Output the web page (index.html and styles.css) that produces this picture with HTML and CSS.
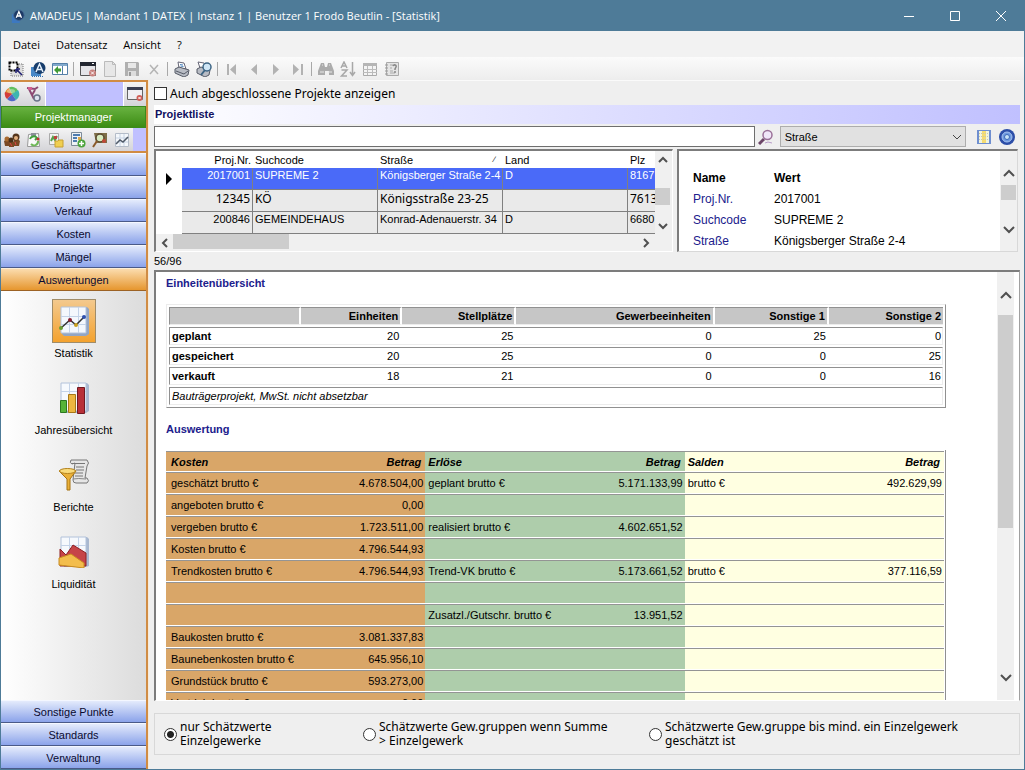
FILE: index.html
```html
<!DOCTYPE html>
<html lang="de">
<head>
  <meta charset="UTF-8">
  <meta name="viewport" content="width=device-width, initial-scale=1.0">
  <title>AMADEUS - Statistik</title>
  <link rel="stylesheet" href="styles.css">
</head>
<body>

<div class="window">
  <header class="titlebar">
    <svg class="app-icon" viewBox="0 0 16 16"><path d="M1 6h9v10H1z" fill="#3d78c0"/><circle cx="9" cy="7" r="6" fill="#1d3a66" stroke="#456a96"/><path d="M6 10l3-7 3 7M7 8h4" stroke="#fff" stroke-width="1.5" fill="none"/></svg>
    <span class="title">AMADEUS | Mandant 1 DATEX | Instanz 1 | Benutzer 1 Frodo Beutlin - [Statistik]</span>
    <button class="win-btn" aria-label="Minimieren"><svg viewBox="0 0 12 12"><path d="M1 6.5h10"/></svg></button>
    <button class="win-btn" aria-label="Maximieren"><svg viewBox="0 0 12 12"><path d="M1.500 1.500h9v9h-9z"/></svg></button>
    <button class="win-btn" aria-label="Schließen"><svg viewBox="0 0 12 12"><path d="M1 1l10 10M11 1L1 11"/></svg></button>
  </header>

  <nav class="menubar">
    <a href="#">Datei</a>
    <a href="#">Datensatz</a>
    <a href="#">Ansicht</a>
    <a href="#">?</a>
  </nav>

  <div class="toolbar">
    <button aria-label="Auswahl"><svg viewBox="0 0 16 16"><path d="M3 3h12v12H3z" fill="#ddd" stroke="#777" stroke-dasharray="1 1"/><path d="M1.500 1.500h8v8h-8z" fill="#fff" stroke="#000" stroke-width="2" stroke-dasharray="2 1"/><path d="M9 9l5 5M8 8v4M8 8h4" stroke="#1c1c70" stroke-width="1.500" fill="none"/></svg></button>
    <button aria-label="Amadeus"><svg viewBox="0 0 16 16"><path d="M1 6h10v9H1z" fill="#4888c8"/><path d="M2 15.500h11" stroke="#3070b0" stroke-dasharray="1 1"/><circle cx="9.500" cy="7" r="6" fill="#173d6c"/><path d="M6 11l3.500-8 3.500 8M7.500 8.500h4" stroke="#e8f2fc" stroke-width="1.500" fill="none"/></svg></button>
    <button aria-label="Navigation"><svg viewBox="0 0 16 16"><path d="M.5 2.500h15v11H.5z" fill="#fff" stroke="#5580a8"/><path d="M1 3h14v2H1z" fill="#82a9cc"/><path d="M10.500 5v8" stroke="#5580a8"/><path d="M2 9l4-4v2.500h3v3H6V13z" fill="#3f9a35"/></svg></button>
    <span class="sep"></span>
    <button aria-label="Fenster schließen"><svg viewBox="0 0 16 16"><path d="M.5 1.500h15v13H.5z" fill="#e4e4e8" stroke="#555"/><path d="M0 1h16v4H0z" fill="#222630"/><path d="M12 2.500h2" stroke="#fff"/><circle cx="12.500" cy="12" r="3.500" fill="#c8807c"/><path d="M11 10.500l3 3m0-3l-3 3" stroke="#fff"/></svg></button>
    <button aria-label="Neu" disabled><svg viewBox="0 0 16 16"><path d="M2.500.5h8l3 3v12h-11z" fill="#e7e7e7" stroke="#bbb"/><path d="M10.500.5v3h3" fill="none" stroke="#bbb"/></svg></button>
    <button aria-label="Speichern" disabled><svg viewBox="0 0 16 16"><path d="M1 1h13l1 1v13H1z" fill="#b0b0b0"/><path d="M4 2h8v5H4z" fill="#e8e8e8"/><path d="M4 10h8v5H4z" fill="#ddd"/><path d="M5 11h2v4H5z" fill="#999"/></svg></button>
    <button aria-label="Löschen" disabled><svg viewBox="0 0 16 16"><path d="M4 4l8 9M12 4l-8 9" stroke="#b4b4b4" stroke-width="1.500"/></svg></button>
    <span class="sep"></span>
    <button aria-label="Drucken"><svg viewBox="0 0 16 16"><path d="M4 1l6 1 2 6-7-1z" fill="#fff" stroke="#667"/><path d="M1 8l4-2 10 3-1 5-4 2-9-4z" fill="#b8bcc4" stroke="#555a66"/><path d="M2 10l8 3 4-3" stroke="#555a66" fill="none"/><path d="M6 3.500l3 .5M6.500 5l3 .5" stroke="#4c86c0"/></svg></button>
    <button aria-label="Druckvorschau"><svg viewBox="0 0 16 16"><path d="M2 1l6 1 2 6-6-1z" fill="#fff" stroke="#667"/><path d="M1 8l4-2 9 3-1 5-4 2-8-4z" fill="#b8bcc4" stroke="#555a66"/><circle cx="11" cy="6" r="4" fill="#cfe6f6" stroke="#3c6484" stroke-width="1.500"/><path d="M9 9l-4 5" stroke="#3c6484" stroke-width="2"/></svg></button>
    <span class="sep"></span>
    <button aria-label="Erster" disabled><svg viewBox="0 0 16 16"><path d="M3 3h2v11H3zM12 3v11L6 8.500z" fill="#b2b2b2"/></svg></button>
    <button aria-label="Zurück" disabled><svg viewBox="0 0 16 16"><path d="M11 3v11L5 8.500z" fill="#b2b2b2"/></svg></button>
    <button aria-label="Weiter" disabled><svg viewBox="0 0 16 16"><path d="M5 3v11l6-5.500z" fill="#b2b2b2"/></svg></button>
    <button aria-label="Letzter" disabled><svg viewBox="0 0 16 16"><path d="M3 3v11l6-5.500zM11 3h2v11h-2z" fill="#b2b2b2"/></svg></button>
    <span class="sep"></span>
    <button aria-label="Suchen" disabled><svg viewBox="0 0 16 16"><path d="M3 2h3l1 4h2l1-4h3l3 8v4h-5v-4H7v4H0v-4z" fill="#acacac"/><path d="M2 11h4M10 11h4M4 4h1M11 4h1" stroke="#e8e8e8"/></svg></button>
    <button aria-label="Sortieren" disabled><svg viewBox="0 0 16 16" fill="none" stroke="#a8a8a8" stroke-width="1.500"><path d="M1 7l3-6 3 6M2 5h4M1.500 9H7l-5.500 6H7M12.500 1v13M10 11l2.500 3.500L15 11"/></svg></button>
    <button aria-label="Tabelle" disabled><svg viewBox="0 0 16 16"><path d="M1.500 2.500h13v12h-13z" fill="#f4f4f4" stroke="#aaa"/><path d="M1 2h14v3H1z" fill="#b5b5b5"/><path d="M1 8.500h14M1 11.500h14M5.500 5v9M10.500 5v9" stroke="#bbb"/></svg></button>
    <button aria-label="Protokoll" disabled><svg viewBox="0 0 16 16"><path d="M2.500 1.500h12v13h-12z" fill="#e4e4e4" stroke="#aaa"/><path d="M1 4h3M1 7h3M1 10h3M1 13h3" stroke="#999"/><path d="M6 4h3M6 7h2M6 10h3M6 12h5" stroke="#aaa"/><path d="M9 5c1-2 4-1 3 1l-1 2v1M11 10v2" stroke="#888" stroke-width="1.500" fill="none"/></svg></button>
  </div>

  <div class="body">
    <aside class="sidebar">
      <div class="quick quick-top">
        <button aria-label="Farben"><svg viewBox="0 0 16 16"><path d="M8 8L1 8a7 7 0 0 1 4-6z" fill="#e08a30"/><path d="M8 8L5 1.500a7 7 0 0 1 9 3z" fill="#60c060"/><path d="M8 8l6-4a7 7 0 0 1-2 10z" fill="#3db5b0"/><path d="M8 8l4 6a7 7 0 0 1-9-1z" fill="#5068c8"/><path d="M8 8l-5 5a7 7 0 0 1-2-7z" fill="#d43c3c"/><ellipse cx="7" cy="5" rx="4" ry="2" fill="#fff" opacity=".35"/></svg></button>
        <button aria-label="Werkzeuge"><svg viewBox="0 0 16 16"><path d="M1 2l8 1 3-2M3 3l5 10M9 4L6 9" stroke="#8c4a74" stroke-width="2" fill="none"/><path d="M2 1h4v3H2z" fill="#d06090"/><circle cx="11" cy="12" r="3" fill="#dde4f0" stroke="#6b7488" stroke-width="1.500"/></svg></button>
        <span class="quick-fill"></span>
        <button aria-label="Fenster"><svg viewBox="0 0 16 16"><path d="M.5 1.500h15v12H.5z" fill="#f0f0f4" stroke="#666"/><path d="M0 1h16v3H0z" fill="#3a3f52"/><circle cx="12.500" cy="12" r="3" fill="#d0605a"/><path d="M11.500 11l2 2m0-2l-2 2" stroke="#fff"/></svg></button>
      </div>
      <button class="module">Projektmanager</button>
      <div class="quick quick-mod">
        <button aria-label="Personen"><svg viewBox="0 0 16 16"><path d="M0 9q3-3 5 0v5H1zM5 10q3-4 5 0v5H5zM10 8q4-2 6 1l-1 5h-5z" fill="#7a4a24"/><circle cx="3" cy="7" r="2.500" fill="#a86a30"/><circle cx="7" cy="8" r="2.500" fill="#4a3018"/><circle cx="12" cy="5" r="3.500" fill="#54351c"/><circle cx="12" cy="6" r="2" fill="#e2b080"/><path d="M6 11l2 3M11 10l1 3" stroke="#d44"/></svg></button>
        <button aria-label="Aufgaben"><svg viewBox="0 0 16 16"><path d="M2.500 2.500l10-1 1 13h-12z" fill="#fafafa" stroke="#999"/><path d="M5 1h5v3H5z" fill="#8b8f98"/><path d="M4 7a4 4 0 0 1 7-1l-2 2" fill="none" stroke="#3ea03a" stroke-width="2"/><path d="M12 9a4 4 0 0 1-7 3" fill="none" stroke="#70b858" stroke-width="2"/><circle cx="12" cy="7" r="1.500" fill="#c03030"/></svg></button>
        <button aria-label="Ordner"><svg viewBox="0 0 16 16"><path d="M1.500 1.500h9v11h-9z" fill="#f3f3f3" stroke="#aaa"/><path d="M3 9l2-4 2 3 2-4" stroke="#58a048" stroke-width="2" fill="none"/><path d="M6 4h3v3H6z" fill="#c04040"/><path d="M7 9h3l1-1h4v7H7z" fill="#f0cf50" stroke="#c8a030"/></svg></button>
        <button aria-label="Neue Kalkulation"><svg viewBox="0 0 16 16"><path d="M1.500.5h10v13h-10z" fill="#eef2f6" stroke="#7c8a98"/><path d="M3 3h7M3 6h4M3 9h4" stroke="#4f7cae" stroke-width="2"/><path d="M8 5h3v3H8z" fill="#e0a848"/><circle cx="11.500" cy="11.500" r="4" fill="#4ca43c"/><path d="M11.500 9v5M9 11.500h5" stroke="#fff" stroke-width="1.500"/></svg></button>
        <button aria-label="Lupe"><svg viewBox="0 0 16 16"><path d="M2 1h13v10H4z" fill="#7e6e48"/><circle cx="8" cy="6" r="4" fill="#d8ecc0" stroke="#5b4a30" stroke-width="1.500"/><path d="M5 9l-4 6" stroke="#8a5a2a" stroke-width="2"/><circle cx="12" cy="9" r="2" fill="#c04838"/></svg></button>
        <button aria-label="Statistik"><svg viewBox="0 0 16 16"><path d="M1.500 1.500h13v13h-13z" fill="#f4f7fb" stroke="#b4bcc8"/><path d="M6 2v12M10 2v12M2 6h12M2 10h12" stroke="#c8d4e4"/><path d="M2 12l4-4 3 2 5-5" stroke="#505a68" stroke-width="1.500" fill="none"/></svg></button>
      </div>
      <nav class="groups">
        <button>Geschäftspartner</button>
        <button>Projekte</button>
        <button>Verkauf</button>
        <button>Kosten</button>
        <button>Mängel</button>
        <button class="active">Auswertungen</button>
      </nav>
      <div class="items">
        <a href="#" class="item selected">
          <span class="item-icon"><svg viewBox="0 0 32 32"><path d="M4 2h25l2 2v25l-3 2H6l-2-2z" fill="#93a6c4"/><path d="M3 2h25v26H3z" fill="#f4f8fd" stroke="#b2c2da"/><path d="M11.500 2v26M20.500 2v26M3 11.500h25M3 19.500h25" stroke="#c4d3e8"/><path d="M3 23l9-8 6 5 8-8" stroke="#333" stroke-width="1.500" fill="none"/><circle cx="3" cy="23" r="2" fill="#6a9c30"/><circle cx="12" cy="15" r="2" fill="#8a2030"/><circle cx="18" cy="20" r="2" fill="#c8a020"/><circle cx="26" cy="12" r="2" fill="#2c50b0"/></svg></span>
          <span>Statistik</span>
        </a>
        <a href="#" class="item">
          <span class="item-icon"><svg viewBox="0 0 32 32"><path d="M5 1h24l2 2v26l-3 2H6z" fill="#a9b8d0"/><path d="M3 1h25v28H3z" fill="#f6f9fd" stroke="#b2c2da"/><path d="M11.500 1v28M20.500 1v28M3 9.500h25" stroke="#c4d3e8"/><path d="M2.500 18.500h6v12h-6z" fill="#56b438" stroke="#2c7820"/><path d="M10.500 12.500h7v18h-7z" fill="#edb640" stroke="#a87818"/><path d="M19.500 5.500h7v26h-7z" fill="#b83038" stroke="#701820"/></svg></span>
          <span>Jahresübersicht</span>
        </a>
        <a href="#" class="item">
          <span class="item-icon"><svg viewBox="0 0 32 32"><path d="M13 1q-2 3 1 4l3-1-2 17q0 3 3 3h11q3-2 0-5h-2l2-12q3-3 0-6z" fill="#e6e6e6" stroke="#777"/><path d="M14 4.500h13M18 8h8M18 11h8M17 14h8M17 17h8" stroke="#777"/><path d="M15 20q5-1 13 0" stroke="#888" fill="none"/><path d="M1 12q8-4 17 0l-6 8v11H9V20z" fill="#eab038" stroke="#a67212"/><ellipse cx="9.500" cy="12" rx="8" ry="2.500" fill="#f9db7c" stroke="#b58420"/></svg></span>
          <span>Berichte</span>
        </a>
        <a href="#" class="item">
          <span class="item-icon"><svg viewBox="0 0 32 32"><path d="M5 1h24l2 2v27l-3 1H6z" fill="#a9b8d0"/><path d="M3 1h25v28H3z" fill="#f6f9fd" stroke="#b2c2da"/><path d="M11.500 1v20M20.500 1v20M3 9.500h25" stroke="#c4d3e8"/><path d="M2 13l6 6 7-10 13 8v13H2z" fill="#c64448" stroke="#8c2024"/><path d="M1 22l12-4 13 9v5L1 29z" fill="#f3bd4c" stroke="#c88c20"/></svg></span>
          <span>Liquidität</span>
        </a>
      </div>
      <nav class="groups">
        <button>Sonstige Punkte</button>
        <button>Standards</button>
        <button>Verwaltung</button>
      </nav>
    </aside>

    <main class="content">
      <div class="option-row">
        <input type="checkbox" id="abgeschlossen">
        <label for="abgeschlossen">Auch abgeschlossene Projekte anzeigen</label>
      </div>
      <h2 class="list-title">Projektliste</h2>

      <div class="search-row">
        <input type="text" class="search" aria-label="Suche">
        <button aria-label="Suchen"><svg viewBox="0 0 16 16"><path d="M6 10l-5 5" stroke="#6c4668" stroke-width="3"/><circle cx="9.500" cy="6" r="4.500" fill="#f0e6f8" stroke="#9a7098" stroke-width="1.500"/><path d="M7 14l3-1 4 1" stroke="#b89cc8" fill="none"/></svg></button>
        <div class="select-wrap">
          <select aria-label="Suchfeld"><option>Straße</option></select>
          <svg viewBox="0 0 10 10"><path d="M1 3l4 4 4-4"/></svg>
        </div>
        <button aria-label="Spalten"><svg viewBox="0 0 16 16"><path d="M1 1h14v14H1z" fill="#6f8fd0"/><path d="M3 2h10v12H3z" fill="#f2f4dc"/><path d="M6 2h4v12H6z" fill="#f6dc70"/><path d="M3 4.500h10M3 7.500h10M3 10.500h10" stroke="#c8c8b0" stroke-dasharray="1 1"/></svg></button>
        <button aria-label="Einstellungen"><svg viewBox="0 0 16 16"><circle cx="8" cy="8" r="8" fill="#2c4ea8"/><circle cx="8" cy="8" r="5" fill="#6f9ae0" stroke="#a8c4f0"/><circle cx="8" cy="8" r="2.500" fill="#c8e4f8" stroke="#3c68b8"/></svg></button>
      </div>

      <div class="panels">
        <div class="grid-panel">
          <div class="grid-top">
            <div class="grid-clip">
              <table class="grid">
                <colgroup><col class="c-mark"><col class="c-nr"><col class="c-text"><col class="c-text"><col class="c-text"><col></colgroup>
                <thead>
                  <tr><th></th><th class="num">Proj.Nr.</th><th>Suchcode</th><th><span class="sorted">Straße <i>∕</i></span></th><th>Land</th><th>Plz</th></tr>
                </thead>
                <tbody>
                  <tr class="current"><td class="mark"><svg viewBox="0 0 6 12"><path d="M0 0v12l6-6z"/></svg></td><td class="num">2017001</td><td>SUPREME 2</td><td>Königsberger Straße 2-4</td><td>D</td><td>8167</td></tr>
                  <tr class="wide"><td class="mark"></td><td class="num">12345</td><td>KÖ</td><td>Königsstraße 23-25</td><td></td><td>7613</td></tr>
                  <tr><td class="mark"></td><td class="num">200846</td><td>GEMEINDEHAUS</td><td>Konrad-Adenauerstr. 34</td><td>D</td><td>6680</td></tr>
                </tbody>
              </table>
            </div>
            <div class="vscroll vscroll-grid">
              <button aria-label="Nach oben"><svg viewBox="0 0 10 10"><path d="M1 7l4-4 4 4"/></svg></button>
              <span class="thumb"></span>
              <button aria-label="Nach unten"><svg viewBox="0 0 10 10"><path d="M1 3l4 4 4-4"/></svg></button>
            </div>
          </div>
          <div class="hscroll">
            <button aria-label="Nach links"><svg viewBox="0 0 10 10"><path d="M7 1L3 5l4 4"/></svg></button>
            <span class="thumb"></span>
            <button aria-label="Nach rechts"><svg viewBox="0 0 10 10"><path d="M3 1l4 4-4 4"/></svg></button>
          </div>
        </div>

        <div class="detail-panel">
          <table class="detail">
            <tr><th>Name</th><th>Wert</th></tr>
            <tr><td>Proj.Nr.</td><td>2017001</td></tr>
            <tr><td>Suchcode</td><td>SUPREME 2</td></tr>
            <tr><td>Straße</td><td>Königsberger Straße 2-4</td></tr>
          </table>
          <div class="vscroll vscroll-detail">
            <button aria-label="Nach oben"><svg viewBox="0 0 12 12"><path d="M1 9l5-5 5 5"/></svg></button>
            <span class="thumb"></span>
            <button aria-label="Nach unten"><svg viewBox="0 0 12 12"><path d="M1 3l5 5 5-5"/></svg></button>
          </div>
        </div>
      </div>

      <div class="count">56/96</div>

      <section class="report">
        <div class="report-body">
          <h3>Einheitenübersicht</h3>
          <table class="units">
            <colgroup><col class="u1"><col class="u2"><col class="u3"><col class="u4"><col class="u3"><col class="u3"></colgroup>
            <tr><th></th><th>Einheiten</th><th>Stellplätze</th><th>Gewerbeeinheiten</th><th>Sonstige 1</th><th>Sonstige 2</th></tr>
            <tr><td>geplant</td><td>20</td><td>25</td><td>0</td><td>25</td><td>0</td></tr>
            <tr><td>gespeichert</td><td>20</td><td>25</td><td>0</td><td>0</td><td>25</td></tr>
            <tr><td>verkauft</td><td>18</td><td>21</td><td>0</td><td>0</td><td>16</td></tr>
            <tr><td colspan="6" class="note">Bauträgerprojekt, MwSt. nicht absetzbar</td></tr>
          </table>

          <h3>Auswertung</h3>
          <table class="result">
            <tr><th>Kosten</th><th>Betrag</th><th>Erlöse</th><th>Betrag</th><th>Salden</th><th>Betrag</th></tr>
            <tr><td>geschätzt brutto €</td><td>4.678.504,00</td><td>geplant brutto €</td><td>5.171.133,99</td><td>brutto €</td><td>492.629,99</td></tr>
            <tr><td>angeboten brutto €</td><td>0,00</td><td></td><td></td><td></td><td></td></tr>
            <tr><td>vergeben brutto €</td><td>1.723.511,00</td><td>realisiert brutto €</td><td>4.602.651,52</td><td></td><td></td></tr>
            <tr><td>Kosten brutto €</td><td>4.796.544,93</td><td></td><td></td><td></td><td></td></tr>
            <tr><td>Trendkosten brutto €</td><td>4.796.544,93</td><td>Trend-VK brutto €</td><td>5.173.661,52</td><td>brutto €</td><td>377.116,59</td></tr>
            <tr><td></td><td></td><td></td><td></td><td></td><td></td></tr>
            <tr><td></td><td></td><td>Zusatzl./Gutschr. brutto €</td><td>13.951,52</td><td></td><td></td></tr>
            <tr><td>Baukosten brutto €</td><td>3.081.337,83</td><td></td><td></td><td></td><td></td></tr>
            <tr><td>Baunebenkosten brutto €</td><td>645.956,10</td><td></td><td></td><td></td><td></td></tr>
            <tr><td>Grundstück brutto €</td><td>593.273,00</td><td></td><td></td><td></td><td></td></tr>
            <tr><td>Vertrieb brutto €</td><td>0,00</td><td></td><td></td><td></td><td></td></tr>
          </table>
        </div>
        <div class="vscroll vscroll-report">
          <button aria-label="Nach oben"><svg viewBox="0 0 12 12"><path d="M1 9l5-5 5 5"/></svg></button>
          <span class="thumb"></span>
          <button aria-label="Nach unten"><svg viewBox="0 0 12 12"><path d="M1 3l5 5 5-5"/></svg></button>
        </div>
      </section>

      <div class="modes">
        <label><input type="radio" name="modus" checked><span>nur Schätzwerte<br>Einzelgewerke</span></label>
        <label><input type="radio" name="modus"><span>Schätzwerte Gew.gruppen wenn Summe<br>&gt; Einzelgewerk</span></label>
        <label><input type="radio" name="modus"><span>Schätzwerte Gew.gruppe bis mind. ein Einzelgewerk<br>geschätzt ist</span></label>
      </div>
    </main>
  </div>
</div>

</body>
</html>
```

FILE: styles.css
```css
* {
  box-sizing: border-box;
}
body {
  margin: 0;
  font-family: "Liberation Sans", Arial, sans-serif;
  font-size: 11px;
  color: #000;
}
button {
  border: none;
  background: none;
  padding: 0;
  font: inherit;
  color: inherit;
}
svg {
  display: block;
}
a {
  color: inherit;
  text-decoration: none;
}
table {
  border-spacing: 0;
}
.window {
  height: 100vh;
  display: flex;
  flex-direction: column;
  background-color: #efefef;
  border: 1px solid #4e7b98;
  border-top: none;
  overflow: hidden;
}

/* title, menu, toolbar */
.titlebar {
  flex: none;
  height: 31px;
  display: flex;
  align-items: center;
  padding-left: 10px;
  background-color: #4e7b98;
  color: #fff;
  font-family: "Open Sans", sans-serif;
}
.app-icon {
  width: 14px;
  height: 14px;
}
.title {
  flex: 1;
  margin-left: 5px;
  white-space: nowrap;
}
.win-btn {
  width: 46px;
  height: 31px;
  display: flex;
  align-items: center;
  justify-content: center;
}
.win-btn svg {
  width: 12px;
  height: 12px;
  fill: none;
  stroke: #fff;
}
.menubar {
  flex: none;
  height: 26px;
  display: flex;
  align-items: center;
  gap: 16px;
  padding-left: 12px;
  background-color: #f2f2f2;
  font-family: "Open Sans", sans-serif;
}
.toolbar {
  flex: none;
  height: 23px;
  display: flex;
  align-items: center;
  padding-left: 4px;
  background: linear-gradient(#fbfbfb, #ededed);
}
.toolbar button {
  width: 22px;
  display: flex;
  justify-content: center;
}
.toolbar svg, .quick svg, .search-row button svg {
  width: 16px;
  height: 16px;
}
.toolbar .sep {
  width: 2px;
  height: 14px;
  margin: 0 2px;
  border-left: 1px solid #a8a8a8;
}
.body {
  flex: 1;
  min-height: 0;
  display: flex;
}

/* sidebar */
.sidebar {
  width: 147px;
  flex: none;
  display: flex;
  flex-direction: column;
  border-top: 2px solid #d08c44;
  border-right: 2px solid #d08c44;
}
.quick {
  display: flex;
  background-color: #c0c0ff;
}
.quick button {
  width: 22px;
  display: flex;
  align-items: center;
  justify-content: center;
  background: linear-gradient(#f4f4f4, #d4d4d8);
}
.quick-top {
  height: 24px;
}
.quick-fill {
  flex: 1;
  border-left: 1px solid #fff;
  border-right: 1px solid #fff;
}
.module {
  height: 22px;
  border: 1px solid #3a8a1c;
  background: linear-gradient(#68b240, #3c8c14);
  color: #fff;
}
.quick-mod {
  height: 25px;
  border-bottom: 2px solid #d08c44;
}
.groups {
  display: flex;
  flex-direction: column;
}
.groups button {
  height: 23px;
  border-top: 1px solid #f4f7ff;
  border-bottom: 1px solid #4a5a88;
  background: linear-gradient(#e4ebfc, #8ba3ea);
  color: #0a0a30;
}
.groups .active {
  background: linear-gradient(#fbdcae, #e6962e);
  border-top-color: #fdeed6;
  border-bottom-color: #9c6224;
}
.items {
  flex: 1;
  min-height: 0;
  overflow: hidden;
  display: flex;
  flex-direction: column;
  gap: 13px;
  padding-top: 8px;
  background: linear-gradient(to right, #fff, #dcdcdc);
}
.item {
  display: flex;
  flex-direction: column;
  align-items: center;
  line-height: 20px;
}
.item-icon {
  width: 44px;
  height: 44px;
  padding: 6px;
}
.selected .item-icon {
  padding: 5px;
  border: 1px solid #a08c68;
  background: linear-gradient(#f3c98e, #f4a22e);
}

/* content */
.content {
  flex: 1;
  min-width: 0;
  display: flex;
  flex-direction: column;
  padding: 0 4px 14px 5px;
  border-left: 1px solid #f8ead6;
}
.option-row {
  flex: none;
  height: 25px;
  display: flex;
  align-items: center;
  gap: 3px;
  font-family: "Noto Sans", sans-serif;
  font-size: 12px;
  border-top: 1px solid #fafafa;
}
.option-row input {
  appearance: none;
  width: 13px;
  height: 13px;
  margin: 0;
  border: 1px solid #333;
  background-color: #fff;
}
.list-title {
  flex: none;
  height: 19px;
  margin: 0 0 2px;
  padding-left: 1px;
  font-size: 11px;
  line-height: 18px;
  color: #101060;
  background: linear-gradient(to right, #fff, #c0c0ff);
}
.search-row {
  flex: none;
  height: 21px;
  display: flex;
  align-items: center;
  padding-right: 2px;
}
.search-row button {
  width: 23px;
  display: flex;
  justify-content: center;
}
.search {
  flex: 600;
  min-width: 0;
  height: 21px;
  border: 1px solid #6e6e6e;
  background-color: #fff;
}
.select-wrap {
  flex: 188;
  position: relative;
  margin: 0 6px 0 2px;
}
.select-wrap select {
  appearance: none;
  width: 100%;
  height: 21px;
  padding: 0 4px;
  border: 1px solid #adadad;
  border-radius: 0;
  background-color: #e1e1e1;
  font: inherit;
  color: #000;
}
.select-wrap svg {
  position: absolute;
  right: 4px;
  top: 6px;
  width: 10px;
  height: 10px;
  fill: none;
  stroke: #444;
  pointer-events: none;
}
.panels {
  flex: none;
  display: flex;
  gap: 4px;
  height: 103px;
  margin-top: 2px;
}
.grid-panel {
  flex: 519;
  min-width: 0;
  display: flex;
  flex-direction: column;
  border: 1px solid #fff;
  border-top: 2px solid #7c7c7c;
  border-left: 2px solid #7c7c7c;
}
.grid-top {
  flex: 1;
  min-height: 0;
  display: flex;
}
.grid-clip {
  flex: 1;
  min-width: 0;
  overflow: hidden;
}
.grid {
  width: 100%;
  table-layout: fixed;
}
.c-mark {
  width: 26px;
}
.c-nr {
  width: 71px;
}
.c-text {
  width: 125px;
}
.grid th, .grid td {
  height: 22px;
  padding: 0 2px;
  text-align: left;
  font-weight: normal;
  white-space: nowrap;
  overflow: hidden;
  line-height: 14px;
}
.grid th {
  height: 17px;
  background-color: #fff;
}
.grid td {
  vertical-align: top;
  background-color: #eaeaea;
  border-right: 1px solid #808080;
  border-bottom: 1px solid #808080;
}
.grid td:last-child {
  border-right: none;
}
.grid .num {
  text-align: right;
}
.grid .mark {
  vertical-align: middle;
  background-color: #fff;
  border: none;
}
.mark svg {
  width: 6px;
  height: 12px;
  margin-left: 8px;
}
.grid .current td:not(.mark) {
  background-color: #4a6af8;
  color: #fff;
}
.grid .wide td {
  font-family: "Noto Sans", sans-serif;
  font-size: 12px;
  line-height: 18px;
}
.sorted {
  display: flex;
  justify-content: space-between;
  padding-right: 6px;
}
.sorted i {
  font-style: normal;
  font-size: 8px;
}

/* scrollbars */
.vscroll {
  width: 17px;
  flex: none;
  display: flex;
  flex-direction: column;
  background-color: #f0f0f0;
}
.vscroll button, .hscroll button {
  flex: none;
  display: flex;
  align-items: center;
  justify-content: center;
}
.vscroll svg, .hscroll svg {
  width: 12px;
  height: 12px;
  fill: none;
  stroke: #505050;
  stroke-width: 2;
}
.vscroll-grid svg, .hscroll svg {
  width: 10px;
  height: 10px;
}
.thumb {
  background-color: #cdcdcd;
}
.vscroll .thumb {
  width: 15px;
}
.vscroll-grid button {
  height: 17px;
}
.vscroll-grid .thumb {
  height: 17px;
  margin: auto 0 12px;
}
.hscroll {
  height: 17px;
  display: flex;
  padding-right: 17px;
  background-color: #f0f0f0;
}
.hscroll button {
  width: 17px;
}
.hscroll .thumb {
  width: 116px;
  height: 15px;
  margin-right: auto;
}
.detail-panel {
  flex: 340;
  min-width: 0;
  display: flex;
  justify-content: space-between;
  margin-right: 2px;
  border: 1px solid #d8d8d8;
  border-top: 2px solid #7c7c7c;
  border-left: 2px solid #7c7c7c;
  background-color: #fff;
}
.detail {
  margin: 16px 0 0 14px;
  font-size: 12px;
}
.detail th, .detail td {
  height: 21px;
  padding: 0;
  text-align: left;
  color: #000;
}
.detail td:first-child {
  color: #20208c;
}
.detail tr > :first-child {
  width: 81px;
}
.vscroll-detail {
  padding: 12px 0;
}
.vscroll-detail button {
  height: 19px;
}
.vscroll-detail .thumb {
  height: 15px;
  margin: 3px 0 auto 1px;
}
.count {
  flex: none;
  height: 18px;
  line-height: 19px;
}

/* report */
.report {
  flex: 1;
  min-height: 0;
  display: flex;
  border: 2px solid #7c7c7c;
  border-right: 1px solid #a0a0a0;
  border-bottom: 1px solid #fff;
  padding-right: 5px;
  background-color: #fff;
}
.report-body {
  flex: 1;
  overflow: hidden;
  padding: 0 51px 0 10px;
}
.report h3 {
  margin: 0;
  padding-top: 3px;
  font-size: 11px;
  line-height: 16px;
  color: #20208c;
}
.units {
  width: 100%;
  margin: 13px 0 10px;
  table-layout: fixed;
  border: 1px solid #ececec;
  border-right-color: #909090;
  border-bottom-color: #909090;
  border-spacing: 0 2px;
  padding: 0 2px;
}
.u1 {
  width: 132px;
}
.u2 {
  width: 101px;
}
.u3 {
  width: 114px;
}
.u4 {
  width: 198px;
}
.units th, .units td {
  height: 18px;
  padding: 0 2px;
  text-align: right;
  line-height: 14px;
  border-top: 1px solid #909090;
  border-bottom: 1px solid #ececec;
}
.units th {
  background-color: #c6c6c6;
  border-right: 2px solid #fff;
}
.units td {
  padding-right: 3px;
}
.units td:last-child {
  padding-right: 1px;
  border-right: 1px solid #ececec;
}
.units tr > :first-child {
  text-align: left;
  border-left: 1px solid #909090;
}
.units td:first-child {
  font-weight: bold;
}
.units th:last-child {
  border-right: none;
}
.units .note:first-child {
  font-weight: normal;
  font-style: italic;
}
.result {
  width: 100%;
  margin-top: 13px;
  table-layout: fixed;
  border-spacing: 0 1px;
  border-right: 1px solid #909090;
  padding-right: 1px;
}
.result th, .result td {
  height: 21px;
  padding: 0 3px;
  border-top: 1px solid #949494;
  text-align: left;
  white-space: nowrap;
  background-color: #ffffe1;
}
.result th {
  height: 20px;
  font-style: italic;
}
.result tr > :nth-child(even) {
  padding-right: 2px;
  text-align: right;
}
.result th:nth-child(even) {
  padding-right: 4px;
}
.result tr > :nth-child(-n+4) {
  background-color: #aecdab;
}
.result tr > :nth-child(-n+2) {
  background-color: #d9a668;
}
.result tr > :first-child {
  padding-left: 5px;
}
.vscroll-report {
  padding: 13px 0;
}
.vscroll-report button {
  height: 19px;
}
.vscroll-report .thumb {
  height: 53%;
  margin: 11px 0 auto 1px;
}

/* estimation mode */
.modes {
  flex: none;
  height: 42px;
  display: grid;
  grid-template-columns: 199fr 286fr 370fr;
  align-items: center;
  margin-top: 12px;
  padding-left: 9px;
  border: 1px solid #d8d8d8;
  font-family: "Noto Sans", sans-serif;
  font-size: 12px;
  line-height: 14px;
}
.modes label {
  display: flex;
  align-items: center;
  gap: 3px;
  white-space: nowrap;
}
.modes input {
  appearance: none;
  flex: none;
  width: 13px;
  height: 13px;
  margin: 0;
  border: 1px solid #333;
  border-radius: 50%;
  background-color: #fff;
}
.modes input:checked {
  background: radial-gradient(circle, #222 0 3px, #fff 4px);
}
```
